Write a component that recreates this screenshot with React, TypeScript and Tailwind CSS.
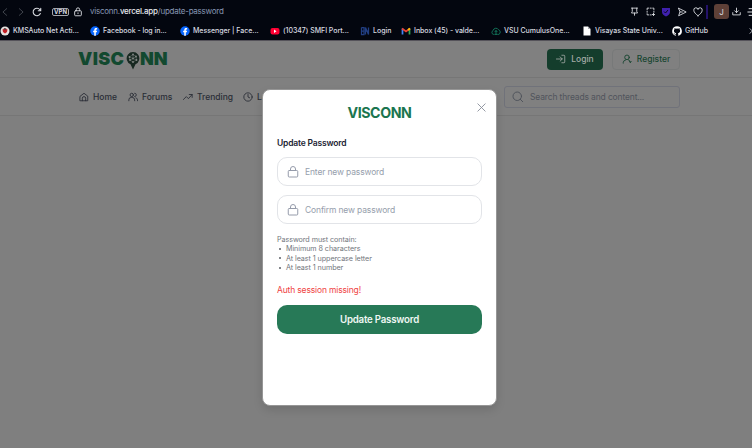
import React from "react";

type IconProps = { className?: string; children: React.ReactNode; w?: number };

function Icon({ className = "", children, w = 1.8 }: IconProps) {
  return (
    <svg viewBox="0 0 24 24" fill="none" stroke="currentColor" strokeWidth={w} strokeLinecap="round" strokeLinejoin="round" className={`shrink-0 ${className}`}>
      {children}
    </svg>
  );
}

function LockIcon() {
  return (
    <Icon className="size-[12px] text-[#959baa]" w={2}>
      <path d="M4.500 9h15a2 2 0 0 1 2 2v9a2 2 0 0 1-2 2h-15a2 2 0 0 1-2-2v-9a2 2 0 0 1 2-2z" />
      <path d="M7 9V6a5 5 0 0 1 10 0v3" />
    </Icon>
  );
}

function Facebook() {
  return (
    <svg viewBox="0 0 20 20" className="size-[10px] shrink-0">
      <circle cx="10" cy="10" r="9.5" fill="#0866ff" />
      <path d="M8.5 19.5v-6.8H6.3V9.6h2.2V8.2c0-3 1.4-4.3 4.2-4.3.6 0 1.200.1 1.600.2v2.700h-1.100c-1.200 0-1.600.5-1.600 1.700v1.100h2.600l-.5 3.100h-2.100v6.800z" fill="#fff" />
    </svg>
  );
}

function Bookmark({ width, icon, label }: { width: string; icon: React.ReactNode; label: string }) {
  return (
    <div className={`flex shrink-0 items-center gap-[3px] whitespace-nowrap ${width}`}>
      {icon}
      <span>{label}</span>
    </div>
  );
}

function BrowserBar() {
  return (
    <div className="h-[41px] overflow-hidden border-b border-[#55535a] bg-[#03060f] text-[#d9dbe0]">
      <div className="flex h-[23px] items-center pr-px">
        <Icon className="size-[10px] text-[#4c4f58]" w={2}><path d="M16 4 7 12l9 8" /></Icon>
        <Icon className="ml-[6px] size-[10px] text-[#4c4f58]" w={2}><path d="m8 4 9 8-9 8" /></Icon>
        <Icon className="ml-[6px] size-[10px]" w={2.6}><path d="M20 15.500A9 9 0 1 1 19 6.500L21 9M21 3v6h-6" /></Icon>
        <span className="ml-[10px] flex h-[8px] w-[17px] items-center justify-center rounded-[2px] border border-[#a5a7ad] text-[6px] font-bold leading-none tracking-[0.1px]">VPN</span>
        <Icon className="ml-[4px] size-[10px]" w={2.200}><rect x="4" y="9" width="16" height="12" rx="2" /><path d="M8 9V6a4 4 0 0 1 8 0v3M12 14v2" /></Icon>
        <span className="-mt-px ml-[7px] text-[8px] leading-none tracking-[-0.240px] text-[#8796b3]">visconn.<span className="font-medium text-[#e7e9ee]">vercel.app</span>/update-password</span>
        <div className="ml-auto flex items-center">
          <Icon className="size-[9px]" w={2.400}><path d="M4 3h16M6 3v9l-2 4h16l-2-4V3M12 16v6" /></Icon>
          <Icon className="ml-[7px] size-[9px]" w={2.400}><path d="M3 7V3h4M11 3h3M18 3h3v4M21 11v3M3 11v3M3 18v3h4M11 21h3M20 17v6M17 20h6" /></Icon>
          <svg viewBox="0 0 20 20" className="ml-[6px] size-[10px]"><path d="M2 2h16v8c0 5-4 7-8 9-4-2-8-4-8-9z" fill="#3f20ad" /><path d="m6 9 3 3 5-6" fill="none" stroke="#080817" strokeWidth="2" /></svg>
          <Icon className="ml-[6px] size-[10px]" w={2.200}><path d="M4 3 22 12 4 21l3-9zM7 12h6" /></Icon>
          <Icon className="ml-[6px] size-[10px]" w={2.200}><path d="M12 21C7 17 2 13 2 8a5 5 0 0 1 10-2 5 5 0 0 1 10 2c0 5-5 9-10 13z" /></Icon>
          <span className="ml-[3px] h-[14px] w-[2px] bg-[#24136a]" />
          <span className="ml-[6px] flex size-[15px] items-center justify-center rounded-[3px] bg-[#5e4037] text-[8px]">J</span>
          <Icon className="ml-[3px] size-[9px]" w={2.400}><path d="M12 3v12m-5-5 5 5 5-5M2 15v6h20v-6" /></Icon>
          <Icon className="ml-[6px] -mr-[6px] size-[10px]" w={2.400}><path d="M5 4h16M2 12h19M5 20h16" /></Icon>
        </div>
      </div>
      <div className="flex h-[15px] items-center text-[7px] font-medium leading-none tracking-[-0.030px]">
        <Bookmark width="w-[90px]" label="KMSAuto Net Acti..." icon={<svg viewBox="0 0 20 20" className="size-[10px] shrink-0"><circle cx="10" cy="10" r="9" fill="#e7e1df" /><path d="m5 7 5-2 5 2-1 5-4 3-4-3z" fill="#c51f25" /><path d="m7 4 6 1-3 4z" fill="#444" /></svg>} />
        <Bookmark width="w-[90px]" label="Facebook - log in..." icon={<Facebook />} />
        <Bookmark width="w-[90px]" label="Messenger | Face..." icon={<Facebook />} />
        <Bookmark width="w-[90px]" label="(10347) SMFI Port..." icon={<svg viewBox="0 0 20 20" className="size-[10px] shrink-0"><rect x="1" y="4" width="18" height="13" rx="4" fill="#ff0033" /><path d="m8 7 5 3.500L8 14z" fill="#fff" /></svg>} />
        <Bookmark width="w-[41px]" label="Login" icon={<svg viewBox="0 0 20 20" className="size-[10px] shrink-0" fill="none" stroke="#213e82" strokeWidth="2.500"><path d="M3 3v14h5V3H3m0 7h5M11 17V3l6 14V3M11 10h6" /></svg>} />
        <Bookmark width="w-[90px]" label="Inbox (45) - valde..." icon={<svg viewBox="0 0 20 20" className="size-[10px] shrink-0" fill="none" strokeWidth="3.500"><path d="M3 17V5" stroke="#4285f4" /><path d="M17 17V5" stroke="#34a853" /><path d="m2 5 8 6 8-6" stroke="#ea4335" /><path d="m14 8 4-3" stroke="#fbbc04" /></svg>} />
        <Bookmark width="w-[91px]" label="VSU CumulusOne..." icon={<Icon className="size-[10px] text-[#168566]" w={2}><path d="M6 20H5a5 5 0 0 1 0-9 7 7 0 0 1 13-2 6 6 0 0 1 1 11h-2M12 20v-9m-3 3 3-3 3 3M9 20h6" /></Icon>} />
        <Bookmark width="w-[90px]" label="Visayas State Univ..." icon={<svg viewBox="0 0 20 20" className="size-[10px] shrink-0"><path d="M3 1h9l5 5v13H3z" fill="#fff" /><path d="M12 1v5h5" fill="#a5a7ad" /></svg>} />
        <Bookmark width="w-[76px]" label="GitHub" icon={<svg viewBox="0 0 24 24" fill="#fff" className="size-[10px] shrink-0"><path d="M12 .7a11.500 11.500 0 0 0-3.600 22.400c.6.1.8-.3.8-.6v-2c-3.200.7-3.900-1.400-3.900-1.400-.5-1.300-1.300-1.700-1.300-1.700-1-.7.1-.7.1-.7 1.200.1 1.800 1.200 1.800 1.200 1 1.800 2.700 1.300 3.400 1 .1-.8.4-1.300.7-1.600-2.600-.3-5.300-1.300-5.300-5.700 0-1.300.4-2.300 1.200-3.100-.1-.3-.5-1.500.1-3.100 0 0 1-.3 3.200 1.200a11 11 0 0 1 5.800 0c2.200-1.500 3.200-1.200 3.200-1.200.6 1.600.2 2.800.1 3.100.8.8 1.200 1.800 1.200 3.100 0 4.400-2.700 5.400-5.300 5.700.4.4.8 1.100.8 2.200v3c0 .3.200.7.8.6A11.500 11.500 0 0 0 12 .7z" /></svg>} />
        <Icon className="size-[8px]" w={2.500}><path d="m6 5 7 7-7 7" /></Icon>
      </div>
    </div>
  );
}

function Logo() {
  return (
    <div className="flex h-[20px] items-center text-[18px] font-black leading-none text-[#12492f]" aria-label="VISCONN">
      <span className="w-[48px] tracking-[0.350px]">VISC</span>
      <svg viewBox="0 0 28 38" className="mt-[2px] h-[19px] w-[14px] shrink-0">
        <path d="M14 37 9 26.500a12.700 12.700 0 1 1 10 0z" fill="#172821" />
        <g fill="none" stroke="#606a65" strokeWidth="1.200"><path d="m14 7 6 4 1 7-7 4-6-4-1-6zM14 7v8m-6 3 6-3 7 3M7 12l7 3 6-4" /></g>
        <g fill="#858987"><circle cx="14" cy="7" r="1.800" /><circle cx="20" cy="11" r="1.800" /><circle cx="21" cy="18" r="1.800" /><circle cx="14" cy="22" r="1.800" /><circle cx="8" cy="18" r="1.800" /><circle cx="7" cy="12" r="1.800" /><circle cx="14" cy="15" r="1.800" /></g>
      </svg>
      <span className="tracking-[-0.200px]">NN</span>
    </div>
  );
}

function NavItem({ width, icon, label }: { width: string; icon: React.ReactNode; label: string }) {
  return (
    <a className={`flex shrink-0 items-center gap-[4px] whitespace-nowrap ${width}`}>
      <Icon className="size-[10px]" w={2.100}>{icon}</Icon>
      <span className="pt-px">{label}</span>
    </a>
  );
}

function Field({ text, className }: { text: string; className: string }) {
  return (
    <div className={`flex h-[29px] shrink-0 items-center gap-[6px] rounded-[10px] border border-[#e2e4e8] pl-[9px] text-[8.500px] leading-none tracking-[-0.150px] text-[#969eac] ${className}`}>
      <LockIcon />
      <span className="pt-px">{text}</span>
    </div>
  );
}

function Modal() {
  return (
    <div className="absolute left-[262px] top-[89px] flex h-[317px] w-[235px] flex-col rounded-[8px] border border-[#969696] bg-white px-[14px] shadow-[0_4px_10px_rgba(0,0,0,0.12)]">
      <div className="relative mt-[13px] flex h-[20px] items-center justify-center pt-px text-[14.200px] font-bold leading-none tracking-[-0.450px] text-[#1b754f]">
        VISCONN
        <Icon className="absolute -right-[5px] -top-[1px] size-[11px] text-[#858b96]" w={1.900}><path d="m4 4 16 16M20 4 4 20" /></Icon>
      </div>
      <h2 className="mt-[14px] h-[12px] text-[8.500px] font-semibold leading-[12px] tracking-[-0.180px] text-[#1b2333]">Update Password</h2>
      <Field text="Enter new password" className="mt-[8px]" />
      <Field text="Confirm new password" className="mt-[9px]" />
      <div className="mt-[11px] text-[7.200px] leading-[9.300px] tracking-[-0.070px] text-[#72767d]">
        <p>Password must contain:</p>
        <ul>
          {["Minimum 8 characters", "At least 1 uppercase letter", "At least 1 number"].map((rule) => (
            <li key={rule} className="flex items-center"><span className="ml-[2px] mr-[5px] size-[2px] rounded-full bg-[#5b5f66]" />{rule}</li>
          ))}
        </ul>
      </div>
      <p className="mt-[12px] h-[12px] text-[8.500px] leading-[12px] tracking-[-0.160px] text-[#ef4444]">Auth session missing!</p>
      <button className="mt-[9px] flex h-[29px] shrink-0 items-center justify-center rounded-[10px] bg-[#277957] text-[9.700px] font-semibold leading-none tracking-[-0.220px] text-[#eff7f3]">Update Password</button>
    </div>
  );
}

export default function App() {
  return (
    <div className="relative h-[448px] w-[752px] overflow-hidden bg-[#7f7f7f] font-['Inter',sans-serif]">
      <BrowserBar />
      <header className="flex h-[37px] items-center justify-between border-b border-[#767676] bg-[#808080] pl-[78px] pr-[72px]">
        <Logo />
        <div className="flex gap-[9px] text-[8.500px] font-medium leading-none">
          <button className="flex h-[21px] w-[56px] items-center justify-center gap-[5px] rounded-[4px] bg-[#143d2c] text-[#a3aaa6]">
            <Icon className="size-[10px]" w={2}><path d="M14 3h5a2 2 0 0 1 2 2v14a2 2 0 0 1-2 2h-5M1 12h14m-5-5 5 5-5 5" /></Icon>Login
          </button>
          <button className="flex h-[21px] w-[68px] items-center justify-center gap-[5px] rounded-[4px] border border-[#777979] text-[#174530]">
            <Icon className="size-[10px]" w={2.200}><circle cx="12" cy="8" r="5.500" /><path d="M3 22v-2a7 7 0 0 1 6-6M15 14c3 1 5 3 5 5m-2-1 2 3 2-3" /></Icon>Register
          </button>
        </div>
      </header>
      <nav className="flex h-[38px] items-center border-b border-[#767676] bg-[#808080] pl-[79px] pr-[72px] text-[8.500px] font-medium leading-none text-[#292d36]">
        <NavItem width="w-[49px]" label="Home" icon={<><path d="M3 10 12 3l9 7v11H3zM8 21v-6a4 4 0 0 1 8 0v6" /></>} />
        <NavItem width="w-[55px]" label="Forums" icon={<><circle cx="9" cy="7" r="4" /><path d="M2 21v-2a6 6 0 0 1 6-6h2a6 6 0 0 1 6 6v2M16 3a4 4 0 0 1 0 8M19 14c3 1 4 3 4 7" /></>} />
        <NavItem width="w-[60px]" label="Trending" icon={<path d="m1 18 7-7 5 5L22 6m-7 0h7v7" />} />
        <NavItem width="w-[40px]" label="Latest" icon={<><circle cx="12" cy="12" r="10" /><path d="M12 6v6l4 2" /></>} />
        <div className="ml-auto flex h-[22px] w-[176px] items-center gap-[6px] rounded-[3px] border border-[#70727a] pl-[7px] font-normal tracking-[-0.150px] text-[#50545c]">
          <Icon className="size-[12px]" w={2}><circle cx="10.500" cy="10.500" r="8.500" /><path d="m16.500 16.500 5 5" /></Icon>
          <span className="pt-px">Search threads and content...</span>
        </div>
      </nav>
      <Modal />
    </div>
  );
}
